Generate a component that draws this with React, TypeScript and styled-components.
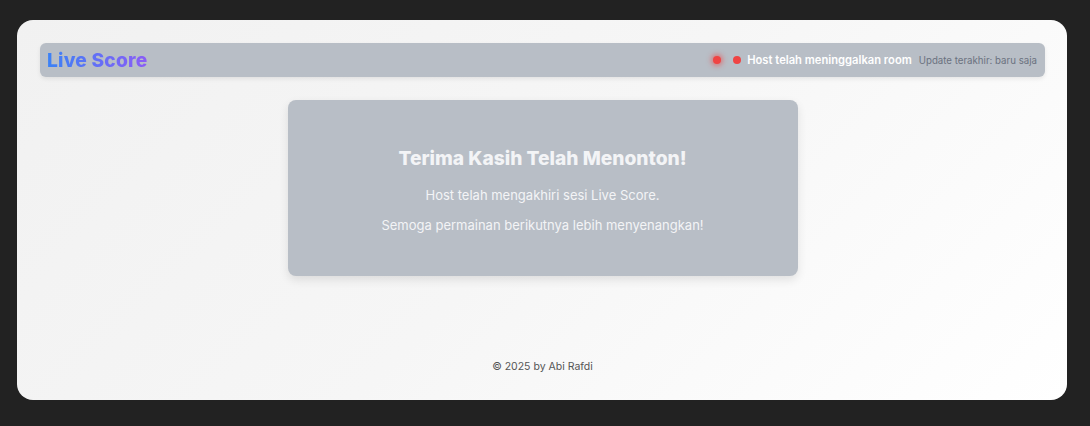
import React from "react";
import styled, { createGlobalStyle } from "styled-components";

const Global = createGlobalStyle`
  html, body { margin: 0; padding: 0; background: #222222; }
  body { font-family: "Inter", "Noto Sans", sans-serif; }
  * { box-sizing: border-box; }
`;

const Page = styled.div`
  padding: 20px 23px 26px 17px;
`;

const Card = styled.div`
  height: 380px;
  border-radius: 16px;
  background: linear-gradient(135deg, #f1f1f1 0%, #f6f6f6 50%, #ffffff 100%);
  padding: 23px 22px 22px 23px;
  display: flex;
  flex-direction: column;
`;

const Header = styled.header`
  height: 34px;
  background: #b8bec6;
  border-radius: 6px;
  box-shadow: 0 2px 4px rgba(0, 0, 0, 0.08);
  display: flex;
  align-items: center;
  justify-content: space-between;
  padding: 0 8px 0 7px;
`;

const Title = styled.h1`
  margin: 0;
  font-size: 19.2px;
  font-weight: 800;
  letter-spacing: 0.2px;
  background: linear-gradient(90deg, #3b82f6, #8b5cf6);
  -webkit-background-clip: text;
  background-clip: text;
  color: transparent;
`;

const Status = styled.div`
  display: flex;
  align-items: center;
`;

const Dot = styled.span<{ $glow?: boolean }>`
  width: 8px;
  height: 8px;
  border-radius: 50%;
  background: #ef4444;
  box-shadow: ${(p) => (p.$glow ? "0 0 5px 2px rgba(239, 68, 68, 0.55)" : "none")};
  margin-right: ${(p) => (p.$glow ? "12px" : "6px")};
`;

const StatusText = styled.span`
  color: #ffffff;
  font-size: 11.2px;
  font-weight: 600;
  margin-right: 7px;
`;

const Updated = styled.span`
  color: #6b7280;
  font-size: 9.7px;
`;

const Main = styled.main`
  display: flex;
  justify-content: center;
  padding-top: 23px;
`;

const Box = styled.section`
  width: 510px;
  height: 176px;
  background: #b8bec6;
  border-radius: 8px;
  box-shadow: 0 4px 10px rgba(0, 0, 0, 0.1);
  display: flex;
  flex-direction: column;
  align-items: center;
  padding-top: 46px;
  color: #f3f4f6;
`;

const BoxTitle = styled.h2`
  margin: 0 0 17px;
  font-size: 19.2px;
  line-height: 24px;
  font-weight: 800;
  color: #f3f4f6;
`;

const BoxText = styled.p`
  margin: 0 0 14px;
  font-size: 13px;
  line-height: 16px;
  color: #f3f4f6;
`;

const Footer = styled.footer`
  margin-top: auto;
  text-align: center;
  font-size: 10.5px;
  color: #555555;
  padding-bottom: 5px;
`;

export default function App() {
  return (
    <>
      <Global />
      <Page>
        <Card>
          <Header>
            <Title>Live Score</Title>
            <Status>
              <Dot $glow />
              <Dot />
              <StatusText>Host telah meninggalkan room</StatusText>
              <Updated>Update terakhir: baru saja</Updated>
            </Status>
          </Header>
          <Main>
            <Box>
              <BoxTitle>Terima Kasih Telah Menonton!</BoxTitle>
              <BoxText>Host telah mengakhiri sesi Live Score.</BoxText>
              <BoxText>Semoga permainan berikutnya lebih menyenangkan!</BoxText>
            </Box>
          </Main>
          <Footer>© 2025 by Abi Rafdi</Footer>
        </Card>
      </Page>
    </>
  );
}
